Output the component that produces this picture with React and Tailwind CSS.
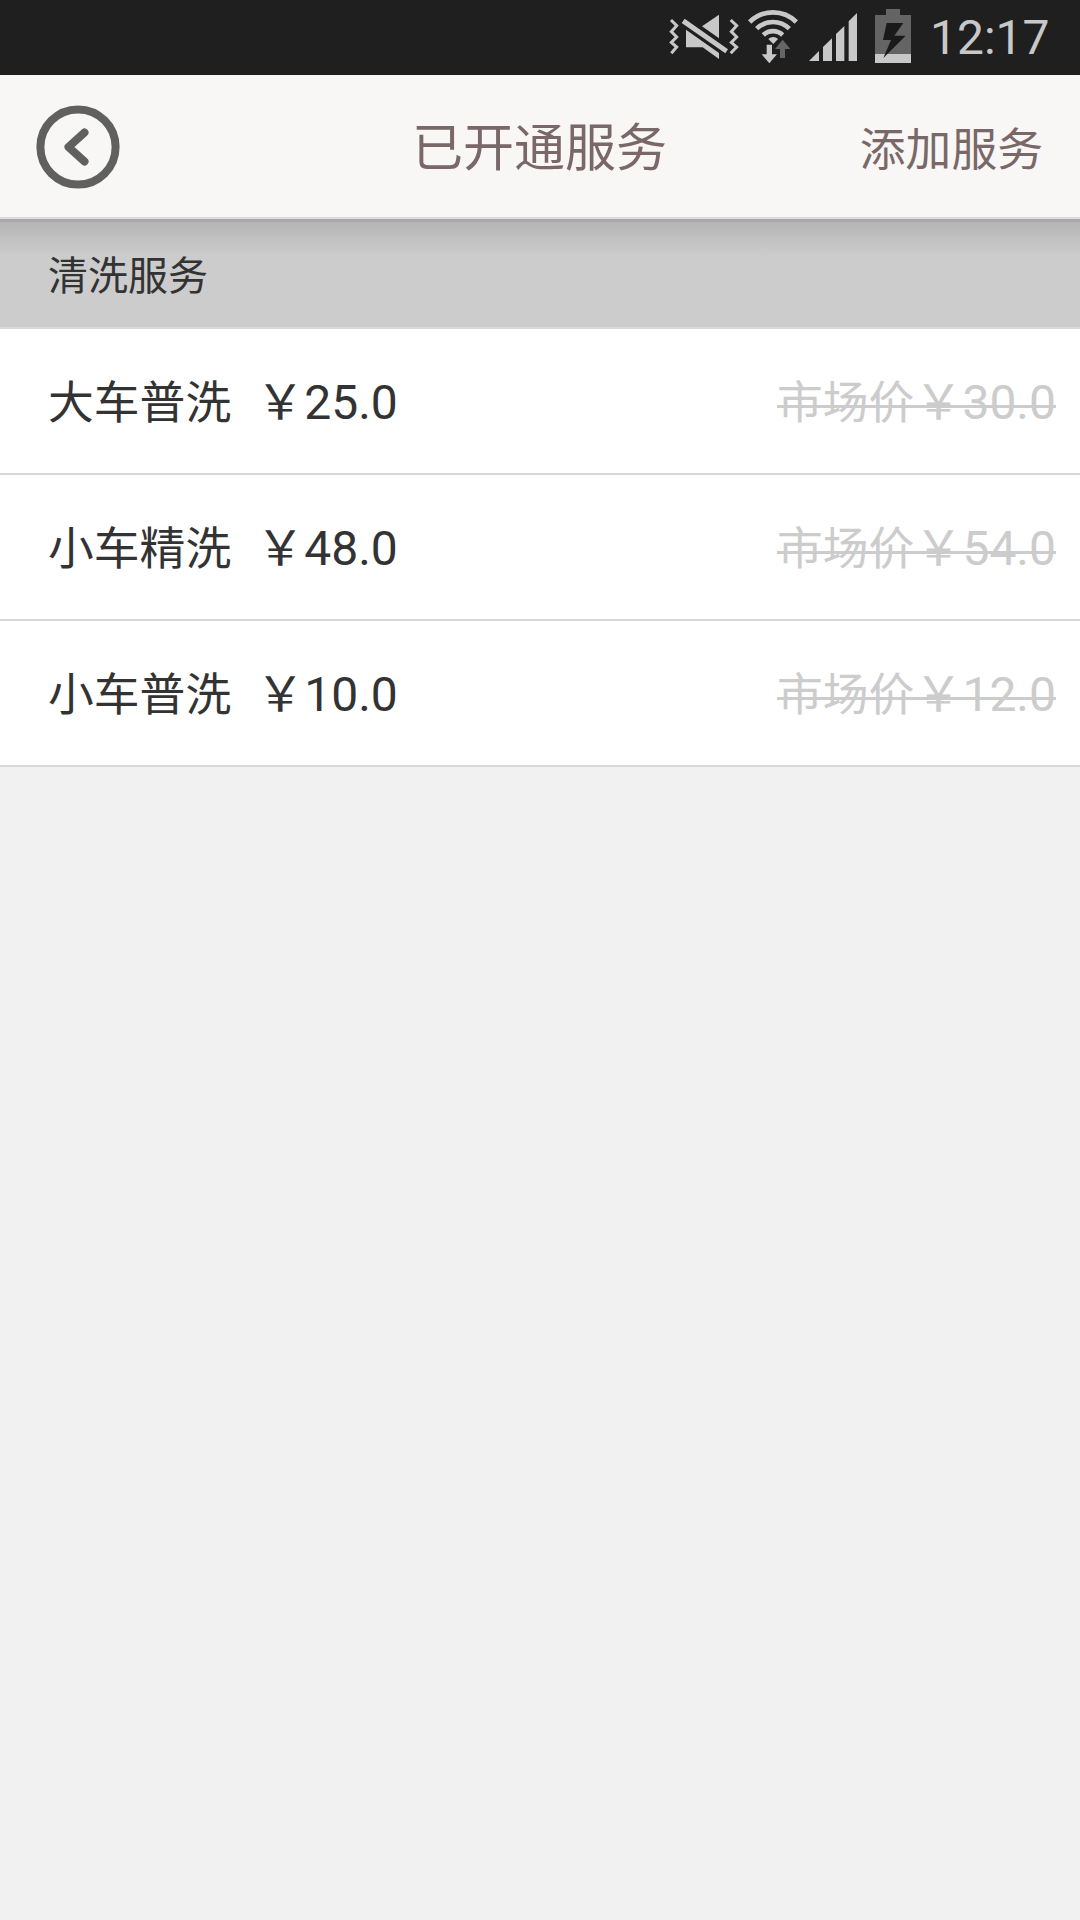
import React from 'react';

const services = [
  { name: '大车普洗', price: '25.0', market: '30.0' },
  { name: '小车精洗', price: '48.0', market: '54.0' },
  { name: '小车普洗', price: '10.0', market: '12.0' },
];

const MuteIcon = () => (
  <svg className="w-[71px] h-[75px]" viewBox="24 0 213 225" fill="#c8c8c8">
    <path d="M33 60 L50 77 L34 95 L50 111 L34 127 L50 141 L34 160" fill="none" stroke="#c8c8c8" strokeWidth="9" />
    <path d="M212 60 L230 77 L214 95 L230 111 L214 127 L230 141 L212 160" fill="none" stroke="#c8c8c8" strokeWidth="9" />
    <path d="M177 44 V115 L126 79 Z" />
    <path d="M78 89 L177 159 V177 L128 142 H78 Z" />
    <path d="M74 56 L204 148 L196 160 L65 69 Z" />
  </svg>
);

const WifiIcon = () => (
  <svg className="w-[50px] h-[75px]" viewBox="264 0 150 225" fill="none" stroke="#c8c8c8">
    <path d="M269 66 A99 99 0 0 1 409 66" strokeWidth="14" />
    <path d="M290 86 A70 70 0 0 1 388 86" strokeWidth="14" />
    <path d="M310 105 A42 42 0 0 1 368 105" strokeWidth="14" />
    <path d="M325 117 A20 20 0 0 1 354 117 L340 132 Z" fill="#c8c8c8" stroke="none" />
    <path d="M320 134 H336 V163 H351 L328 190 L305 163 H320 Z" fill="#c8c8c8" stroke="none" />
    <path d="M368 119 L391 147 H375 V174 H360 V147 H345 Z" fill="#666666" stroke="none" />
  </svg>
);

const SignalIcon = () => (
  <svg className="w-[49px] h-[75px]" viewBox="27 0 147 225" fill="#c8c8c8">
    <path d="M27 183 L57 153 V183 Z" />
    <path d="M69 183 V141 L96 115 V183 Z" />
    <path d="M108 183 V102 L133 78 V183 Z" />
    <path d="M146 183 V64 L171 39 V183 Z" />
  </svg>
);

const BatteryIcon = () => (
  <svg className="w-[36px] h-[75px]" viewBox="225 0 108 225">
    <path d="M258 27 H300 V45 H333 V189 H225 V45 H258 Z" fill="#646464" />
    <path d="M225 162 H333 V189 H225 Z" fill="#c8c8c8" />
    <path d="M260 69 H310 L283 107 H317 L250 174 L273 120 H249 Z" fill="#1a1a1a" />
  </svg>
);

const StatusBar = () => (
  <div className="flex h-[75px] items-center bg-[#1f1f1f] pl-[668px]">
    <MuteIcon />
    <div className="ml-[9px]"><WifiIcon /></div>
    <div className="ml-[11px]"><SignalIcon /></div>
    <div className="ml-[17px]"><BatteryIcon /></div>
    <span className="ml-[19px] text-[48px] leading-[75px] text-[#c8c8c8]">12:17</span>
  </div>
);

const Header = () => (
  <div className="grid h-36 grid-cols-[1fr_auto_1fr] items-center border-b-2 border-[#d9dde3] bg-[#f8f7f5] pr-[37px] pl-[36px] text-[#7a6868]">
    <button type="button" className="h-[84px] w-[84px] mt-[2px]">
      <svg className="h-[84px] w-[84px]" viewBox="0 0 84 84" fill="none" stroke="#606060">
        <circle cx="42" cy="42" r="37.6" strokeWidth="8" />
        <path d="M48.5 27.5 L32.5 42 L48.5 56.5" strokeWidth="8" strokeLinecap="round" strokeLinejoin="round" />
      </svg>
    </button>
    <h1 className="pt-[6px] text-[51px] leading-[60px]">已开通服务</h1>
    <button type="button" className="justify-self-end pt-[10px] text-[45.8px] leading-[60px]">添加服务</button>
  </div>
);

// the yen sign keeps a full-width cell
const Price = ({ value }) => (
  <span className="flex text-[48px]">
    <span className="w-[48px] text-center">￥</span>
    <span>{value}</span>
  </span>
);

const ServiceRow = ({ service }) => (
  <li className="flex h-[146px] items-center justify-between border-b-2 border-[#d9d9d9] bg-white pt-[4px] pr-6 pl-12 leading-[64px]">
    <div className="flex items-baseline text-[#333333]">
      <span className="mr-[25px] pt-[2px] text-[45.8px]">{service.name}</span>
      <Price value={service.price} />
    </div>
    <div className="relative flex items-baseline text-[#cccccc]">
      <span className="pt-[2px] text-[45.8px]">市场价</span>
      <Price value={service.market} />
      <span className="absolute inset-x-0 top-[35px] h-[3px] bg-[#cccccc]"></span>
    </div>
  </li>
);

const App = () => {
  return (
    <div className="min-h-[1920px] w-[1080px] bg-[#f1f1f1] font-['Roboto','Noto_Sans_CJK_SC',sans-serif]">
      <StatusBar />
      <Header />
      <div className="flex h-[110px] items-center border-b-2 border-[#d9d9d9] bg-[#cccccc] bg-linear-to-b from-[#b3b3b3] to-[#cccccc] to-[36px] pl-12 shadow-[inset_0_3px_0_#a8a8a8]">
        <h2 className="pt-[7px] text-[40px] leading-[60px] text-[#333333]">清洗服务</h2>
      </div>
      <ul>
        {services.map((service) => (
          <ServiceRow key={service.name} service={service} />
        ))}
      </ul>
    </div>
  );
};

export default App;
